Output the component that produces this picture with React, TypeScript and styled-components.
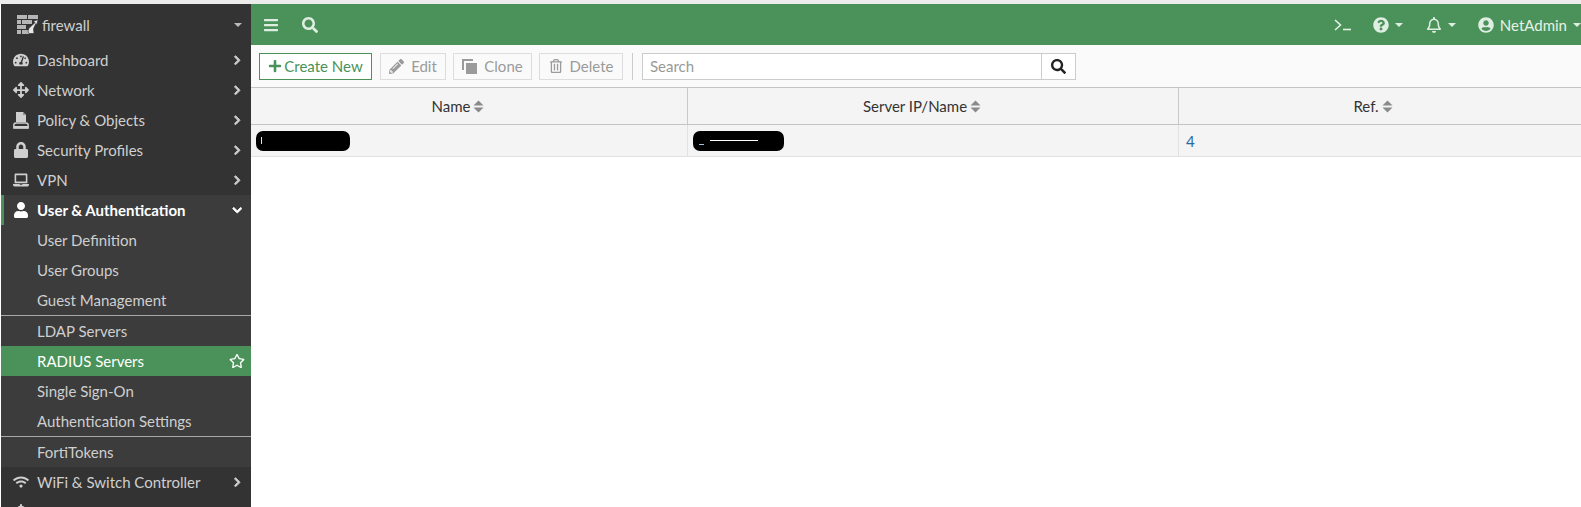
import React from "react";
import styled, { createGlobalStyle } from "styled-components";
import {
  FaArrowsAlt, FaBars, FaBell, FaChevronDown, FaChevronRight, FaLaptop, FaLock,
  FaPencilAlt, FaPlus, FaQuestionCircle, FaRegBell, FaRegStar, FaRegTrashAlt, FaSearch,
  FaTachometerAlt, FaUser, FaUserCircle, FaWifi,
} from "react-icons/fa";

const Global = createGlobalStyle`
  html, body { margin: 0; padding: 0; height: 507px; overflow: hidden; background: #fff; }
  * { box-sizing: border-box; }
  body { font-family: Lato, "Open Sans", sans-serif; font-size: 15px; }
`;

const Page = styled.div`
  height: 507px;
  overflow: hidden;
  display: flex;
  flex-direction: column;
  padding: 4px 0 0 1px;
  background: linear-gradient(#ececec 0 4px, #fff 4px);
`;
const Shell = styled.div`
  flex: 1;
  min-height: 0;
  display: flex;
`;
const Sidebar = styled.nav`
  width: 250px;
  flex: none;
  background: #333;
  color: #cfcfcf;
  overflow: hidden;
`;
const Device = styled.div`
  height: 41px;
  display: flex;
  align-items: center;
  padding: 0 9px 0 16px;
  gap: 3px;
  color: #cfcfcf;
`;
const DeviceName = styled.span`
  flex: 1;
  font-size: 15px;
`;
const Caret = styled.i<{ $color?: string }>`
  width: 0;
  height: 0;
  flex: none;
  border-left: 4px solid transparent;
  border-right: 4px solid transparent;
  border-top: 4px solid ${(p) => p.$color ?? "#bbb"};
`;
const MenuRow = styled.div<{ $open?: boolean }>`
  height: 30px;
  display: flex;
  align-items: center;
  padding: 0 9px 0 ${(p) => (p.$open ? "9px" : "12px")};
  background: ${(p) => (p.$open ? "#3c3c3c" : "#333")};
  color: ${(p) => (p.$open ? "#fff" : "#cfcfcf")};
  font-weight: ${(p) => (p.$open ? 700 : 400)};
  border-left: ${(p) => (p.$open ? "3px solid #4a9259" : "0")};
`;
const MenuIcon = styled.span`
  width: 24px;
  flex: none;
  display: flex;
  align-items: center;
  justify-content: flex-start;
  font-size: 16px;
`;
const MenuLabel = styled.span`
  flex: 1;
  white-space: nowrap;
`;
const Chevron = styled.span`
  display: flex;
  font-size: 10.5px;
  svg {
    stroke: currentColor;
    stroke-width: 45px;
  }
`;
const SubRow = styled.div<{ $active?: boolean }>`
  height: 30px;
  display: flex;
  align-items: center;
  padding: 0 6px 0 36px;
  background: ${(p) => (p.$active ? "#4a9259" : "#3c3c3c")};
  color: ${(p) => (p.$active ? "#fff" : "#cfcfcf")};
`;
const SubDivider = styled.div`
  height: 1px;
  background: #a8a8a8;
`;
const Main = styled.main`
  flex: 1;
  min-width: 0;
  display: flex;
  flex-direction: column;
`;
const TopBar = styled.header`
  height: 41px;
  flex: none;
  background: #4a9259;
  color: #dfeee2;
  display: flex;
  align-items: center;
  padding-left: 12px;
`;
const TopIcon = styled.span<{ $gap?: number }>`
  display: flex;
  align-items: center;
  font-size: 16px;
  margin-right: ${(p) => p.$gap ?? 0}px;
`;
const Spacer = styled.div`
  flex: 1;
`;
const TopGroup = styled.div<{ $left?: number }>`
  display: flex;
  align-items: center;
  gap: 6px;
  margin-left: ${(p) => p.$left ?? 0}px;
`;
const UserName = styled.span`
  font-size: 15px;
  color: #e6f1e8;
`;
const Toolbar = styled.div`
  height: 42px;
  flex: none;
  background: #fafafa;
  display: flex;
  align-items: center;
  padding: 0 0 0 8px;
`;
const Btn = styled.button<{ $primary?: boolean; $w: number }>`
  width: ${(p) => p.$w}px;
  height: 27px;
  margin-right: ${(p) => (p.$primary ? 8 : 7)}px;
  padding: 0;
  display: flex;
  align-items: center;
  justify-content: center;
  gap: ${(p) => (p.$primary ? 2 : 7)}px;
  font: 15px Lato, sans-serif;
  background: ${(p) => (p.$primary ? "#fff" : "#fafafa")};
  border: 1px solid ${(p) => (p.$primary ? "#4a9259" : "#ddd")};
  color: ${(p) => (p.$primary ? "#4a9259" : "#9b9b9b")};
`;
const ToolDivider = styled.div`
  width: 1px;
  height: 27px;
  background: #ccc;
  margin: 0 9px 0 2px;
`;
const SearchBox = styled.div`
  width: 434px;
  height: 27px;
  display: flex;
  background: #fff;
  border: 1px solid #ccc;
`;
const SearchInput = styled.div`
  flex: 1;
  padding-left: 7px;
  line-height: 25px;
  color: #999;
  font-size: 15px;
`;
const SearchBtn = styled.div`
  width: 34px;
  border-left: 1px solid #ccc;
  display: flex;
  align-items: center;
  justify-content: center;
  color: #222;
  font-size: 15px;
`;
const Grid = styled.div`
  display: grid;
  grid-template-columns: 437px 491px 1fr;
`;
const HeadCell = styled.div<{ $shift: number }>`
  height: 38px;
  background: #f4f4f4;
  border-top: 1px solid #c4c4c4;
  border-bottom: 1px solid #c4c4c4;
  border-right: 1px solid #c8c8c8;
  display: flex;
  align-items: center;
  justify-content: center;
  gap: 3px;
  color: #333;
  padding-right: ${(p) => p.$shift}px;
  &:nth-child(3) {
    border-right: 0;
  }
`;
const BodyCell = styled.div`
  height: 32px;
  background: #f4f4f4;
  border-bottom: 1px solid #e2e2e2;
  border-right: 1px solid #e2e2e2;
  display: flex;
  align-items: center;
  padding-left: 5px;
  &:last-child {
    border-right: 0;
  }
`;
const RefLink = styled.a`
  color: #2b66a8;
  padding-left: 2px;
`;
const Redaction = styled.span<{ $w: number }>`
  position: relative;
  display: block;
  width: ${(p) => p.$w}px;
  height: 20px;
  background: #000;
  border-radius: 7px;
`;
const RedactionMark = styled.span`
  position: absolute;
  background: #fff;
`;
const DashMark = styled(RedactionMark)`
  left: 17px;
  top: 9px;
  width: 48px;
  height: 1px;
`;
const CornerMark = styled(RedactionMark)`
  left: 6px;
  top: 13px;
  width: 5px;
  height: 1px;
  background: #9fc4e0;
`;
const TickMark = styled(RedactionMark)`
  left: 5px;
  top: 6px;
  width: 1px;
  height: 7px;
  background: #cfeaf5;
`;

const SortIcon = () => (
  <svg width="11" height="13" viewBox="0 0 11 13" aria-hidden>
    <path d="M5.5 0.5 10.5 5.5H0.5Z" fill="#8a8a8a" />
    <path d="M0.5 7.5H10.5L5.5 12.5Z" fill="#8a8a8a" />
  </svg>
);

const FirewallLogo = () => (
  <svg width="22" height="19" viewBox="0 0 22 19" aria-hidden>
    <g fill="#b5b5b5">
      <rect x="0" y="0" width="10" height="4" />
      <rect x="11" y="0" width="10" height="4" />
      <rect x="0" y="5" width="4" height="4" />
      <rect x="5" y="5" width="10" height="4" />
      <rect x="0" y="10" width="9" height="4" />
      <rect x="0" y="15" width="4" height="4" />
      <rect x="5" y="15" width="7" height="4" />
    </g>
    <path d="M12 18.5c-2-3 0-6 3-8l3-3-2-1 5-2-1 5-1-1-2 4c-1 2 0 4 0 6Z" fill="#e8e8e8" stroke="#333" strokeWidth="0.7" />
  </svg>
);

const PolicyIcon = () => (
  <svg width="16" height="17" viewBox="0 0 16 17" aria-hidden>
    <path d="M3 0H10L13 3V10H3Z" fill="#cfcfcf" />
    <path d="M10 0 13 3H10Z" fill="#8f8f8f" />
    <path d="M0.8 16V13.5C.8 12 2 11 3 11H13C14.5 11 15.2 12 15.2 13.5V16Z" fill="none" stroke="#cfcfcf" strokeWidth="1.4" />
    <rect x="1" y="14" width="14" height="2.4" fill="#cfcfcf" />
  </svg>
);

const CloneIcon = () => (
  <svg width="15" height="15" viewBox="0 0 15 15" aria-hidden>
    <path d="M0 0H11V2H2V11H0Z" fill="#9b9b9b" />
    <rect x="4" y="4" width="11" height="11" fill="#9b9b9b" />
  </svg>
);

const CliIcon = () => (
  <svg width="17" height="12" viewBox="0 0 17 12" aria-hidden fill="none" stroke="#e6f1e8" strokeWidth="1.6">
    <path d="M1 1 6.5 6 1 11" />
    <path d="M9 10.5H17" />
  </svg>
);

const top = [
  { icon: <FaTachometerAlt />, label: "Dashboard" },
  { icon: <FaArrowsAlt />, label: "Network" },
  { icon: <PolicyIcon />, label: "Policy & Objects" },
  { icon: <FaLock />, label: "Security Profiles" },
  { icon: <FaLaptop />, label: "VPN" },
];

const Row = ({ icon, label }: { icon: React.ReactNode; label: string }) => (
  <MenuRow>
    <MenuIcon>{icon}</MenuIcon>
    <MenuLabel>{label}</MenuLabel>
    <Chevron>
      <FaChevronRight />
    </Chevron>
  </MenuRow>
);

export default function App() {
  return (
    <Page>
      <Global />
      <Shell>
        <Sidebar>
          <Device>
            <FirewallLogo />
            <DeviceName>firewall</DeviceName>
            <Caret />
          </Device>
          {top.map((t) => (
            <Row key={t.label} icon={t.icon} label={t.label} />
          ))}
          <MenuRow $open>
            <MenuIcon>
              <FaUser />
            </MenuIcon>
            <MenuLabel>User &amp; Authentication</MenuLabel>
            <Chevron>
              <FaChevronDown />
            </Chevron>
          </MenuRow>
          <SubRow>User Definition</SubRow>
          <SubRow>User Groups</SubRow>
          <SubRow>Guest Management</SubRow>
          <SubDivider />
          <SubRow>LDAP Servers</SubRow>
          <SubRow $active>
            <MenuLabel>RADIUS Servers</MenuLabel>
            <TopIcon>
              <FaRegStar />
            </TopIcon>
          </SubRow>
          <SubRow>Single Sign-On</SubRow>
          <SubRow>Authentication Settings</SubRow>
          <SubDivider />
          <SubRow>FortiTokens</SubRow>
          <Row icon={<FaWifi />} label="WiFi & Switch Controller" />
          <MenuRow>
            <MenuIcon>
              <FaBell />
            </MenuIcon>
          </MenuRow>
        </Sidebar>
        <Main>
          <TopBar>
            <TopIcon $gap={23}>
              <FaBars />
            </TopIcon>
            <TopIcon>
              <FaSearch />
            </TopIcon>
            <Spacer />
            <TopIcon $gap={22}>
              <CliIcon />
            </TopIcon>
            <TopGroup>
              <FaQuestionCircle size={16} />
              <Caret $color="#dfeee2" />
            </TopGroup>
            <TopGroup $left={23}>
              <FaRegBell size={16} />
              <Caret $color="#dfeee2" />
            </TopGroup>
            <TopGroup $left={22}>
              <FaUserCircle size={16} />
              <UserName>NetAdmin</UserName>
              <Caret $color="#dfeee2" />
            </TopGroup>
          </TopBar>
          <Toolbar>
            <Btn $primary $w={113}>
              <FaPlus size={14} />
              Create New
            </Btn>
            <Btn $w={66}>
              <FaPencilAlt size={15} />
              Edit
            </Btn>
            <Btn $w={79}>
              <CloneIcon />
              Clone
            </Btn>
            <Btn $w={84}>
              <FaRegTrashAlt size={14} />
              Delete
            </Btn>
            <ToolDivider />
            <SearchBox>
              <SearchInput>Search</SearchInput>
              <SearchBtn>
                <FaSearch />
              </SearchBtn>
            </SearchBox>
          </Toolbar>
          <Grid>
            <HeadCell $shift={22}>
              Name <SortIcon />
            </HeadCell>
            <HeadCell $shift={22}>
              Server IP/Name <SortIcon />
            </HeadCell>
            <HeadCell $shift={14}>
              Ref. <SortIcon />
            </HeadCell>
            <BodyCell>
              <Redaction $w={94}>
                <TickMark />
              </Redaction>
            </BodyCell>
            <BodyCell>
              <Redaction $w={91}>
                <DashMark />
                <CornerMark />
              </Redaction>
            </BodyCell>
            <BodyCell>
              <RefLink>4</RefLink>
            </BodyCell>
          </Grid>
        </Main>
      </Shell>
    </Page>
  );
}
